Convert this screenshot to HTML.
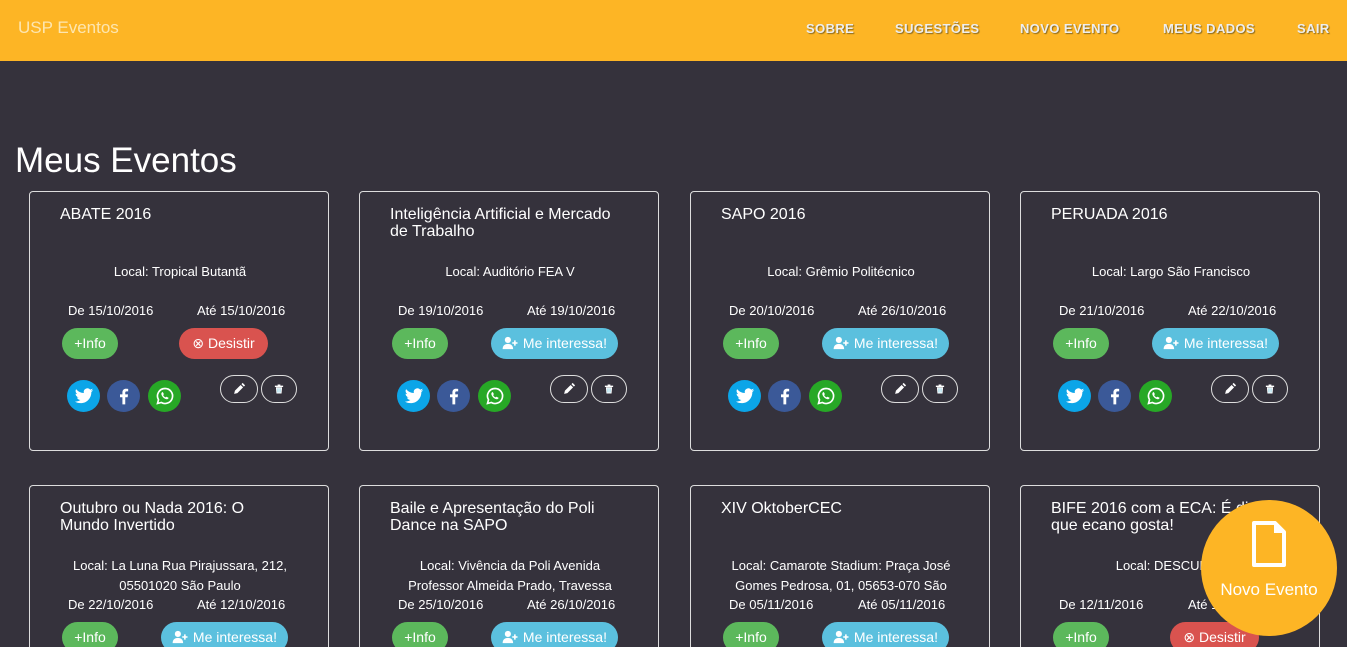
<!DOCTYPE html>
<html><head><meta charset="utf-8"><style>
*{box-sizing:border-box;margin:0;padding:0}
html,body{width:1347px;height:647px;overflow:hidden}
body{background:#35323c;font-family:"Liberation Sans",sans-serif;color:#fff;position:relative}
.nav{position:absolute;left:0;top:0;width:1347px;height:61px;background:#fdb525}
.brand{position:absolute;left:18px;top:18px;font-size:17px;color:#fde6b0}
.nl{position:absolute;top:21px;font-size:13px;color:#eee;text-shadow:1px 1px 1px #8a6a20;letter-spacing:.4px;font-weight:bold}
h1{position:absolute;left:15px;top:141px;font-size:35px;font-weight:normal}
.card{position:absolute;width:300px;height:162px;border:1px solid #ddd;border-radius:4px;font-size:13px}
.r1{height:260px}
.t{position:absolute;left:30px;top:14px;width:245px;font-size:16px;line-height:17px}
.l{position:absolute;left:30px;width:240px;top:70px;text-align:center;line-height:20px}
.d1,.d2{position:absolute;top:111px}
.d1{left:38px}.d2{left:167px}
.b{position:absolute;top:136px;height:31px;border-radius:16px;line-height:31px;text-align:center;font-size:14px}
.i{left:32px;width:56px;background:#5cb85c}
.x{left:149px;width:89px;background:#d9534f}
.m{left:131px;width:127px;background:#5bc0de}
.s{position:absolute;top:188px;width:33px;height:32px;border-radius:50%}
.s svg,.e svg{position:absolute;left:50%;top:50%;transform:translate(-50%,-50%)}
.tw{left:37px;background:#0ba5e8}.fb{left:77px;background:#3b5998}.wa{left:118px;background:#27a826}
.e{position:absolute;top:183px;height:28px;border:1px solid #ddd;border-radius:14px}
.e1{left:190px;width:38px}.e2{left:231px;width:36px}
.fab{position:absolute;left:1201px;top:500px;width:136px;height:136px;border-radius:50%;background:#fdb525;text-align:center}
.card:not(.r1){border-bottom:none;border-radius:4px 4px 0 0}
</style></head><body>
<svg width="0" height="0" style="position:absolute"><defs>
<symbol id="tw" viewBox="0 0 24 24"><path fill="#fff" d="M23 5c-.8.4-1.7.6-2.6.7.9-.6 1.6-1.4 2-2.5-.9.5-1.8.9-2.9 1.1A4.5 4.5 0 0 0 11.8 8.4 12.8 12.8 0 0 1 2.5 3.7a4.5 4.5 0 0 0 1.4 6 4.4 4.4 0 0 1-2-.6 4.5 4.5 0 0 0 3.600 4.5 4.5 4.5 0 0 1-2 .1 4.5 4.5 0 0 0 4.2 3.1A9 9 0 0 1 1 18.6 12.8 12.8 0 0 0 8 20.6c8.3 0 12.8-6.9 12.8-12.8v-.6c.9-.6 1.6-1.4 2.2-2.2z"/></symbol>
<symbol id="fb" viewBox="0 0 24 24"><path fill="#fff" d="M13.5 22v-8.5h2.9l.4-3.4h-3.3V8c0-1 .3-1.6 1.7-1.6h1.8v-3A24 24 0 0 0 14.4 3.3c-2.6 0-4.3 1.6-4.3 4.4v2.4H7.2v3.4h2.9V22z"/></symbol>
<symbol id="wa" viewBox="0 0 24 24"><path fill="none" stroke="#fff" stroke-width="2" d="M12 3a9 9 0 0 0-7.8 13.5L3 21l4.6-1.2A9 9 0 1 0 12 3z"/><path fill="#fff" d="M8.5 7.5c.3-.3.8-.3 1 0l1 2c.1.3 0 .6-.2.8l-.5.6c.6 1.2 1.6 2.2 2.8 2.8l.6-.5c.2-.2.5-.3.8-.2l2 1c.3.2.3.7 0 1-1 1-2 1.2-3.6.5-2-1-3.5-2.5-4.4-4.4-.7-1.6-.5-2.600.5-3.6z"/></symbol>
<symbol id="pen" viewBox="0 0 16 16"><path fill="#fff" d="M2 14l1-4 7-7 3 3-7 7zM11 2l1.5-1.5 3 3L14 5z"/></symbol>
<symbol id="tr" viewBox="0 0 16 16"><path fill="#fff" d="M2 3h12v2H2zM6 1.5h4V3H6zM3.5 5.5h9l-.8 9H4.3z"/><path stroke="#5bc0de" stroke-width="1" d="M6.5 7v6M9.5 7v6"/></symbol>
<symbol id="us" viewBox="0 0 18 16"><circle cx="6" cy="4.5" r="3.5" fill="#fff"/><path fill="#fff" d="M0 15c0-4 2.5-6 6-6s6 2 6 6z"/><path stroke="#fff" stroke-width="1.8" d="M14 5v6M11 8h6"/></symbol>
</defs></svg>
<div class="nav"><div class="brand">USP Eventos</div>
<div class="nl" style="left:806px">SOBRE</div><div class="nl" style="left:895px">SUGESTÕES</div><div class="nl" style="left:1020px">NOVO EVENTO</div><div class="nl" style="left:1163px">MEUS DADOS</div><div class="nl" style="left:1297px">SAIR</div></div>
<h1>Meus Eventos</h1>

<div class="card r1" style="left:29px;top:191px"><div class="t">ABATE 2016</div><div class="l">Local: Tropical Butantã</div><div class="d1">De 15/10/2016</div><div class="d2">Até 15/10/2016</div><div class="b i">+Info</div><div class="b x">⊗ Desistir</div><div class="s tw"><svg width="20" height="20"><use href="#tw"/></svg></div><div class="s fb"><svg width="20" height="20"><use href="#fb"/></svg></div><div class="s wa"><svg width="20" height="20"><use href="#wa"/></svg></div><div class="e e1"><svg width="13" height="13"><use href="#pen"/></svg></div><div class="e e2"><svg width="11" height="11"><use href="#tr"/></svg></div></div>
<div class="card r1" style="left:359px;top:191px"><div class="t" style="width:235px">Inteligência Artificial e Mercado de Trabalho</div><div class="l">Local: Auditório FEA V</div><div class="d1">De 19/10/2016</div><div class="d2">Até 19/10/2016</div><div class="b i">+Info</div><div class="b m"><svg width="17" height="14" style="vertical-align:-2px"><use href="#us"/></svg> Me interessa!</div><div class="s tw"><svg width="20" height="20"><use href="#tw"/></svg></div><div class="s fb"><svg width="20" height="20"><use href="#fb"/></svg></div><div class="s wa"><svg width="20" height="20"><use href="#wa"/></svg></div><div class="e e1"><svg width="13" height="13"><use href="#pen"/></svg></div><div class="e e2"><svg width="11" height="11"><use href="#tr"/></svg></div></div>
<div class="card r1" style="left:690px;top:191px"><div class="t">SAPO 2016</div><div class="l">Local: Grêmio Politécnico</div><div class="d1">De 20/10/2016</div><div class="d2">Até 26/10/2016</div><div class="b i">+Info</div><div class="b m"><svg width="17" height="14" style="vertical-align:-2px"><use href="#us"/></svg> Me interessa!</div><div class="s tw"><svg width="20" height="20"><use href="#tw"/></svg></div><div class="s fb"><svg width="20" height="20"><use href="#fb"/></svg></div><div class="s wa"><svg width="20" height="20"><use href="#wa"/></svg></div><div class="e e1"><svg width="13" height="13"><use href="#pen"/></svg></div><div class="e e2"><svg width="11" height="11"><use href="#tr"/></svg></div></div>
<div class="card r1" style="left:1020px;top:191px"><div class="t">PERUADA 2016</div><div class="l">Local: Largo São Francisco</div><div class="d1">De 21/10/2016</div><div class="d2">Até 22/10/2016</div><div class="b i">+Info</div><div class="b m"><svg width="17" height="14" style="vertical-align:-2px"><use href="#us"/></svg> Me interessa!</div><div class="s tw"><svg width="20" height="20"><use href="#tw"/></svg></div><div class="s fb"><svg width="20" height="20"><use href="#fb"/></svg></div><div class="s wa"><svg width="20" height="20"><use href="#wa"/></svg></div><div class="e e1"><svg width="13" height="13"><use href="#pen"/></svg></div><div class="e e2"><svg width="11" height="11"><use href="#tr"/></svg></div></div>

<div class="card" style="left:29px;top:485px"><div class="t" style="width:220px">Outubro ou Nada 2016: O Mundo Invertido</div><div class="l">Local: La Luna Rua Pirajussara, 212, 05501020 São Paulo</div><div class="d1">De 22/10/2016</div><div class="d2">Até 12/10/2016</div><div class="b i">+Info</div><div class="b m"><svg width="17" height="14" style="vertical-align:-2px"><use href="#us"/></svg> Me interessa!</div></div>
<div class="card" style="left:359px;top:485px"><div class="t" style="width:225px">Baile e Apresentação do Poli Dance na SAPO</div><div class="l" style="left:35px;width:230px">Local: Vivência da Poli Avenida Professor Almeida Prado, Travessa</div><div class="d1">De 25/10/2016</div><div class="d2">Até 26/10/2016</div><div class="b i">+Info</div><div class="b m"><svg width="17" height="14" style="vertical-align:-2px"><use href="#us"/></svg> Me interessa!</div></div>
<div class="card" style="left:690px;top:485px"><div class="t">XIV OktoberCEC</div><div class="l">Local: Camarote Stadium: Praça José Gomes Pedrosa, 01, 05653-070 São</div><div class="d1">De 05/11/2016</div><div class="d2">Até 05/11/2016</div><div class="b i">+Info</div><div class="b m"><svg width="17" height="14" style="vertical-align:-2px"><use href="#us"/></svg> Me interessa!</div></div>
<div class="card" style="left:1020px;top:485px"><div class="t">BIFE 2016 com a ECA: É disso que ecano gosta!</div><div class="l">Local: DESCUBRA</div><div class="d1">De 12/11/2016</div><div class="d2">Até 12/11/2016</div><div class="b i">+Info</div><div class="b x">⊗ Desistir</div></div>

<div class="fab"><svg width="36" height="48" viewBox="0 0 36 48" style="position:absolute;left:50px;top:20px"><path d="M3 3H24L33 12V45H3Z" fill="none" stroke="#fff" stroke-width="4" stroke-linejoin="round"/><path d="M23 3V13H33Z" fill="#fff"/></svg><div style="position:absolute;left:0;width:136px;top:80px;font-size:17px">Novo Evento</div></div>
</body></html>
